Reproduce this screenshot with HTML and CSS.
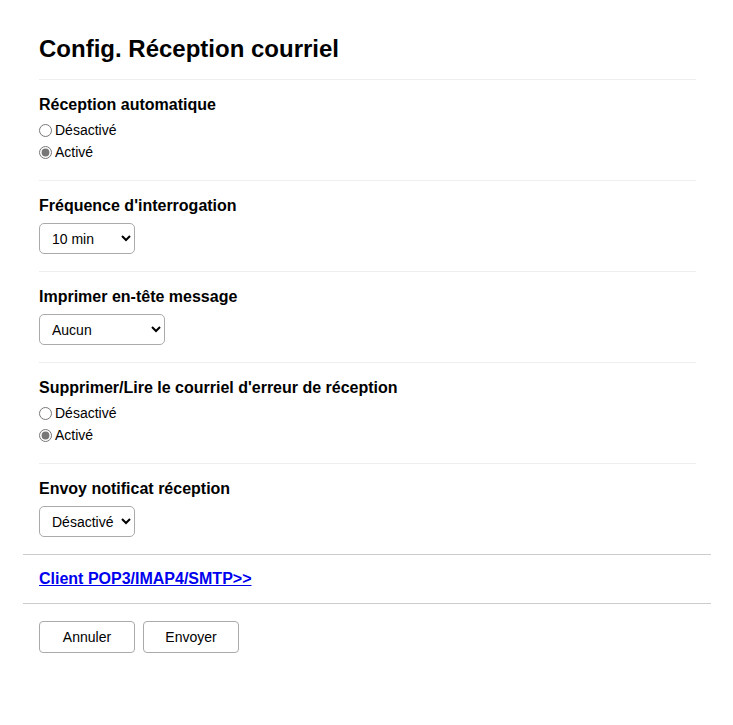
FILE: index.html
```html
<!DOCTYPE html>
<html lang="fr">
<head>
  <meta charset="UTF-8" />
  <title>Config. Réception courriel</title>
  <link rel="stylesheet" href="styles.css">
</head>
<body>
  <div class="page">
    <form class="settings">
      <div class="inner">
        <h1>Config. Réception courriel</h1>

        <div class="section">
          <div class="label label-radios">Réception automatique</div>
          <label class="radio"><input type="radio" name="auto" value="off"> Désactivé</label>
          <label class="radio"><input type="radio" name="auto" value="on" checked> Activé</label>
        </div>

        <div class="section">
          <div class="label">Fréquence d'interrogation</div>
          <select class="sel sel-short">
            <option>10 min</option>
            <option>30 min</option>
            <option>60 min</option>
          </select>
        </div>

        <div class="section">
          <div class="label">Imprimer en-tête message</div>
          <select class="sel sel-long">
            <option>Aucun</option>
            <option>Tout</option>
          </select>
        </div>

        <div class="section">
          <div class="label label-radios">Supprimer/Lire le courriel d'erreur de réception</div>
          <label class="radio"><input type="radio" name="err" value="off"> Désactivé</label>
          <label class="radio"><input type="radio" name="err" value="on" checked> Activé</label>
        </div>

        <div class="section last">
          <div class="label">Envoy notificat réception</div>
          <select class="sel sel-short">
            <option>Désactivé</option>
            <option>Activé</option>
          </select>
        </div>
      </div>

      <div class="links">
        <a href="#">Client POP3/IMAP4/SMTP&gt;&gt;</a>
      </div>

      <div class="actions">
        <button type="button">Annuler</button>
        <button type="submit">Envoyer</button>
      </div>
    </form>
  </div>
</body>
</html>
```

FILE: styles.css
```css
body {
  margin: 0;
  font-family: "Liberation Sans", Arial, sans-serif;
  color: #000;
  background: #fff;
}

.page {
  padding: 0 22px 0 23px;
}

.inner {
  padding: 0 15px 0 16px;
}

h1 {
  font-size: 24px;
  font-weight: bold;
  margin: 0;
  padding: 35px 0 16px;
  line-height: 28px;
  border-bottom: 1px solid #eee;
}

.section {
  padding: 16px 0 17px;
  border-bottom: 1px solid #eee;
}

.section.last {
  border-bottom: none;
}

.label {
  font-size: 16px;
  font-weight: bold;
  line-height: 18px;
  margin-bottom: 8px;
}

.label-radios {
  margin-bottom: 5px;
}

.radio {
  display: flex;
  align-items: center;
  font-size: 14px;
  height: 22px;
}

.radio input {
  margin: 0 3px 0 0;
  width: 13px;
  height: 13px;
  accent-color: #777;
}

.sel {
  font-family: "Liberation Sans", Arial, sans-serif;
  font-size: 14px;
  height: 31px;
  padding: 0 0 0 8px;
  border: 1px solid #aaa;
  border-radius: 5px;
  background: #fff;
  color: #000;
}

.sel-short {
  width: 96px;
}

.sel-long {
  width: 126px;
}

.links {
  border-top: 1px solid #ccc;
  border-bottom: 1px solid #ccc;
  padding: 14px 16px 15px;
  font-size: 16px;
  line-height: 19px;
}

.links a {
  color: #00e;
  font-weight: bold;
}

.actions {
  padding: 17px 16px;
  display: flex;
  gap: 8px;
}

.actions button {
  font-family: "Liberation Sans", Arial, sans-serif;
  font-size: 14px;
  width: 96px;
  height: 32px;
  background: #fff;
  border: 1px solid #aaa;
  border-radius: 4px;
  color: #000;
}
```
